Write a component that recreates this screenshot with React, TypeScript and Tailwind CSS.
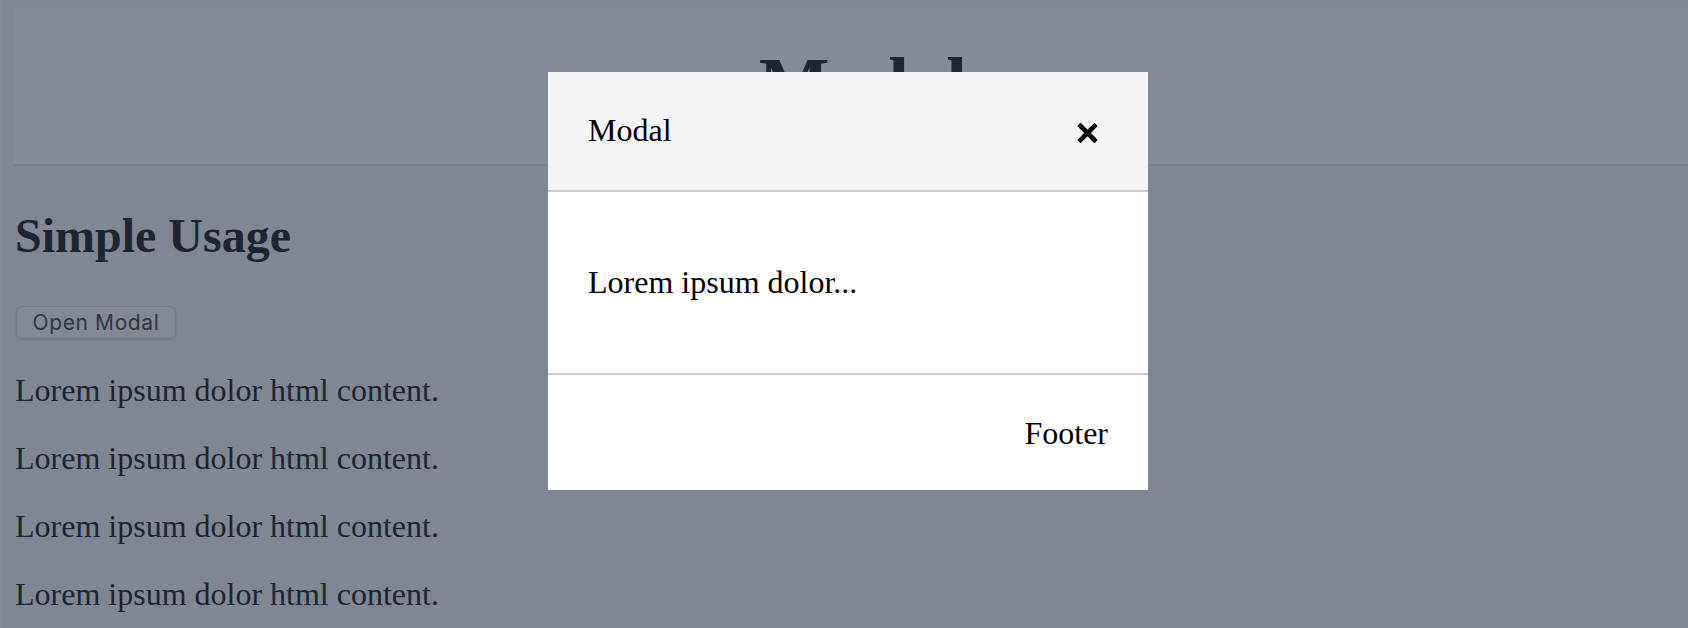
import React, { useState } from 'react';

const serif = { fontFamily: '"Liberation Serif", "Times New Roman", serif' };

function CloseIcon() {
  return (
    <svg width="21" height="20" viewBox="0 0 21 20" fill="none">
      <path d="M3.5 3 L17.5 17 M17.5 3 L3.5 17" stroke="#000" strokeWidth="4.6" strokeLinecap="square" />
    </svg>
  );
}

export default function App() {
  const [open, setOpen] = useState(true);
  const lines = [1, 2, 3, 4];

  return (
    <div className="relative h-screen overflow-hidden bg-[#f7f7f7]" style={serif}>
      <div className="flex h-full">
        <div className="w-[2px] bg-white" />
        <div className="flex-1 pl-[12px] pt-[8px]">
          <header className="bg-white border-b-2 border-[#e7e7e7] pt-[33px] pb-[38px] pl-[24px] text-center">
            <h1 className="text-[75px] font-bold leading-[85px] text-[#333]">Modal</h1>
          </header>

          <main className="pl-[1px] text-[#333]">
            <h2 className="mt-[42px] text-[48px] font-bold leading-[55px]">Simple Usage</h2>

            <button
              onClick={() => setOpen(true)}
              className="mt-[43px] ml-[1px] h-[33px] w-[160px] rounded-[6px] border border-[#dedede] bg-[#fafafa] text-[21px] tracking-[0.6px] text-[#555] shadow-sm"
              style={{ fontFamily: 'Inter, "Liberation Sans", sans-serif' }}
            >
              Open Modal
            </button>

            <div className="mt-[33px] flex flex-col gap-[32px]">
              {lines.map((i) => (
                <p key={i} className="text-[32px] leading-[36px]">
                  Lorem ipsum dolor html content.
                </p>
              ))}
            </div>
          </main>
        </div>
      </div>

      {open && (
        <div className="absolute inset-0 flex items-start justify-center bg-[rgba(9,21,45,0.5)] pl-[8px] pt-[72px]">
          <div className="w-[600px] bg-white text-[32px] leading-[37px] text-black">
            <div className="flex items-center justify-between border-b-2 border-[#cccccc] bg-[#f4f4f4] p-[40px] pb-[41px]">
              <span>Modal</span>
              <button onClick={() => setOpen(false)} className="mr-[10px] mt-[5px]">
                <CloseIcon />
              </button>
            </div>
            <div className="border-b-2 border-[#cccccc] px-[40px] py-[72px]">
              <p>Lorem ipsum dolor...</p>
            </div>
            <div className="px-[40px] pt-[40px] pb-[38px] text-right">Footer</div>
          </div>
        </div>
      )}
    </div>
  );
}
